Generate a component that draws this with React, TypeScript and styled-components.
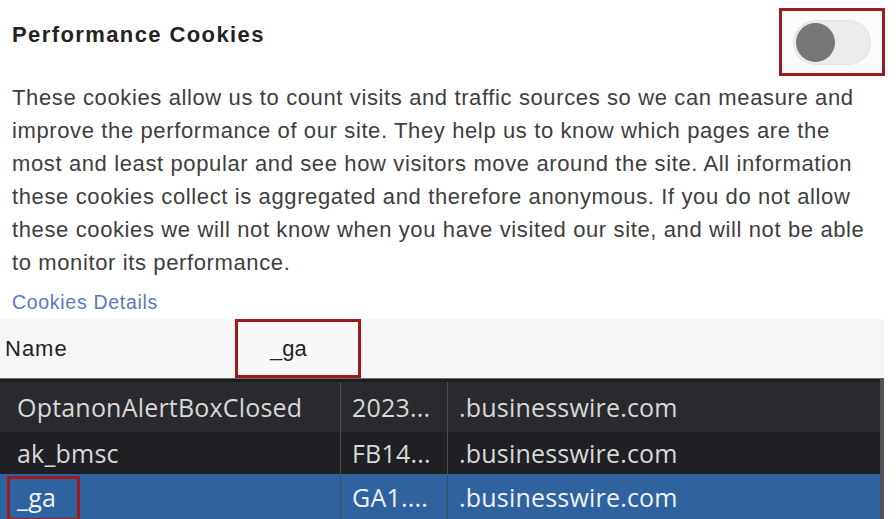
import styled, { createGlobalStyle } from "styled-components";

const GlobalStyle = createGlobalStyle`
  html, body {
    margin: 0;
    padding: 0;
    background: #ffffff;
  }
  body {
    width: 896px;
    height: 519px;
    overflow: hidden;
  }
`;

const Page = styled.div`
  width: 896px;
  height: 519px;
  display: flex;
  flex-direction: column;
  background: #ffffff;
  font-family: "Liberation Sans", Arial, sans-serif;
`;

const Header = styled.div`
  display: flex;
  align-items: center;
  justify-content: space-between;
  height: 81px;
  padding: 0 11px 0 12px;
  box-sizing: border-box;
`;

const Title = styled.h2`
  margin: 0 0 11px;
  font-size: 22px;
  font-weight: 700;
  letter-spacing: 1.4px;
  color: #232323;
`;

const Highlight = styled.div`
  box-sizing: border-box;
  border: 3px solid #9e1b1b;
  display: flex;
  align-items: center;
`;

const ToggleBox = styled(Highlight)`
  width: 106px;
  height: 68px;
  margin-top: 3px;
  justify-content: center;
  background: #fbfbfb;
`;

const Track = styled.div`
  position: relative;
  width: 78px;
  height: 45px;
  border-radius: 23px;
  background: #ececec;
  border: 1px solid #e0e3e8;
  box-sizing: border-box;
`;

const Knob = styled.span`
  position: absolute;
  left: 2px;
  top: 2px;
  width: 39px;
  height: 39px;
  border-radius: 50%;
  background: #777777;
`;

const Description = styled.p`
  margin: 0;
  padding: 0 12px;
  font-size: 22px;
  letter-spacing: 0.62px;
  line-height: 33px;
  color: #3e3e3e;
`;

const Line = styled.span`
  display: block;
  white-space: nowrap;
`;

const DetailsLink = styled.a`
  display: block;
  margin: 12px 0 6px 12px;
  font-size: 19.5px;
  letter-spacing: 0.7px;
  line-height: 22px;
  color: #5a79bd;
  text-decoration: none;
`;

const NameRow = styled.div`
  display: flex;
  align-items: center;
  width: 884px;
  height: 59px;
  background: #f6f6f6;
`;

const NameLabel = styled.span`
  width: 235px;
  padding-left: 5px;
  box-sizing: border-box;
  font-size: 22px;
  letter-spacing: 1px;
  color: #222222;
`;

const NameInput = styled(Highlight)`
  width: 126px;
  height: 59px;
  padding-left: 32px;
  background: #f8f8f8;
  font-size: 22px;
  color: #222222;
`;

const Table = styled.div`
  width: 884px;
  flex: 1;
  display: flex;
  flex-direction: column;
  padding-top: 3px;
  background: #1c1d20;
  border-top: 1px solid #6a6a6a;
  border-right: 4px solid #505257;
  box-sizing: border-box;
  font-family: "Open Sans", "Noto Sans", sans-serif;
  overflow: hidden;
`;

const Row = styled.div<{ $bg: string; $height: number }>`
  display: grid;
  grid-template-columns: 341px 107px 1fr;
  height: ${(p) => p.$height}px;
  background: ${(p) => p.$bg};
  flex-shrink: 0;
`;

const Cell = styled.div<{ $selected?: boolean; $first?: boolean }>`
  position: relative;
  display: flex;
  align-items: center;
  padding-left: ${(p) => (p.$first ? 17 : 11)}px;
  border-right: 1px solid #4a4c52;
  font-size: 25px;
  letter-spacing: 0.2px;
  color: ${(p) => (p.$selected ? "#eef2f8" : "#d8d8d8")};
  white-space: nowrap;
  overflow: hidden;

  &:last-child {
    border-right: none;
  }
`;

const NameMark = styled.span`
  position: absolute;
  left: 7px;
  width: 73px;
  top: 2px;
  bottom: -2px;
  border: 3px solid #a11d1d;
  box-sizing: border-box;
`;

const rows = [
  { name: "OptanonAlertBoxClosed", value: "2023...", domain: ".businesswire.com", bg: "#292a2e", height: 50 },
  { name: "ak_bmsc", value: "FB14...", domain: ".businesswire.com", bg: "#1f2023", height: 42 },
  { name: "_ga", value: "GA1....", domain: ".businesswire.com", bg: "#2e63a0", height: 45, selected: true },
];

const description = [
  "These cookies allow us to count visits and traffic sources so we can measure and",
  "improve the performance of our site. They help us to know which pages are the",
  "most and least popular and see how visitors move around the site. All information",
  "these cookies collect is aggregated and therefore anonymous. If you do not allow",
  "these cookies we will not know when you have visited our site, and will not be able",
  "to monitor its performance.",
];

export default function App() {
  return (
    <>
      <GlobalStyle />
      <Page>
        <Header>
          <Title>Performance Cookies</Title>
          <ToggleBox>
            <Track>
              <Knob />
            </Track>
          </ToggleBox>
        </Header>
        <Description>
          {description.map((line) => (
            <Line key={line}>{line}</Line>
          ))}
        </Description>
        <DetailsLink href="#">Cookies Details</DetailsLink>
        <NameRow>
          <NameLabel>Name</NameLabel>
          <NameInput>_ga</NameInput>
        </NameRow>
        <Table>
          {rows.map((r) => (
            <Row key={r.name} $bg={r.bg} $height={r.height}>
              <Cell $first $selected={r.selected}>
                {r.name}
                {r.selected && <NameMark />}
              </Cell>
              <Cell $selected={r.selected}>{r.value}</Cell>
              <Cell $selected={r.selected}>{r.domain}</Cell>
            </Row>
          ))}
        </Table>
      </Page>
    </>
  );
}
